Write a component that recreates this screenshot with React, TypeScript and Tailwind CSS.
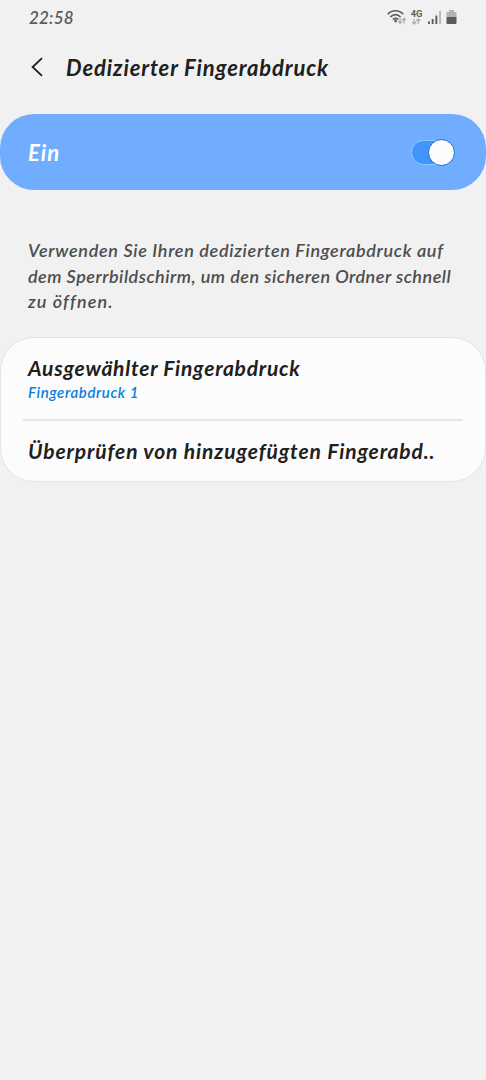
import { useState } from 'react'

const description = [
  { text: 'Verwenden Sie Ihren dedizierten Fingerabdruck auf', tracking: 'tracking-[0.68px]' },
  { text: 'dem Sperrbildschirm, um den sicheren Ordner schnell', tracking: 'tracking-[0.5px]' },
  { text: 'zu öffnen.', tracking: 'tracking-[1.1px]' },
]

function StatusIcons() {
  return (
    <svg className="h-[18px] w-[72px] not-italic" viewBox="0 0 72 18" fill="none">
      {/* wifi */}
      <g stroke="#5c5c5c" strokeWidth="1.7">
        <path d="M.8 6.2C5 1.6 12 1.6 16.2 6.2" />
        <path d="M3.4 9C6.3 5.8 10.7 5.8 13.6 9" />
        <path d="M5.9 11.5C7.5 9.9 9.7 9.9 11.2 11.5" />
      </g>
      <circle cx="8.6" cy="13" r="1.4" fill="#5c5c5c" />
      <g stroke="#b0b0b0" strokeWidth="1.3">
        <path d="M13.1 10v5.2M11.2 13.2l1.9 2 1.9-2M17.1 15.4v-5.2M15.2 12.2l1.9-2 1.9 2" />
        <path d="M27.1 11v5M25.1 14l2 2 2-2M31.3 16v-5M29.3 13l2-2 2 2" />
      </g>
      <text x="23.7" y="9" fill="#5c5c5c" fontSize="9.3" fontWeight="700" fontFamily="Roboto, sans-serif">4G</text>
      {/* signal */}
      <g fill="#5c5c5c">
        <path d="M41 13.4h1.9V16H41zM44.7 11h1.9v5h-1.9zM48.4 7.5h1.9V16h-1.9z" />
        <path d="M52.1 3h1.9v13h-1.9z" fill="#b8b8b8" />
      </g>
      {/* battery */}
      <path d="M62 2h5v2h2.5v5h-10V4H62z" fill="#b3b3b3" />
      <path d="M59.5 9h10v6.3q0 .7-.7.7h-8.6q-.7 0-.7-.7z" fill="#5c5c5c" />
    </svg>
  )
}

export default function App() {
  const [on, setOn] = useState(true)

  return (
    <div className="h-[1080px] w-[486px] overflow-hidden bg-[#f1f1f1] font-['Lato',sans-serif] text-[#202020] italic">
      <div className="flex h-9 items-start justify-between pt-2 pr-[27px] pl-[29px]">
        <span className="text-[17px] leading-5 font-semibold tracking-[0.2px] text-[#5c5c5c]">22:58</span>
        <StatusIcons />
      </div>

      <header className="flex h-[62px] items-center pl-[31px]">
        <button aria-label="Zurück" className="mr-[23px]">
          <svg className="h-5 w-3" viewBox="0 0 12 20" fill="none" stroke="#202020" strokeWidth="1.8">
            <path d="M11 1.2L1.6 10 11 18.8" />
          </svg>
        </button>
        <h1 className="text-[22px] font-bold tracking-[0.87px] whitespace-nowrap">Dedizierter Fingerabdruck</h1>
      </header>

      <section className="mt-4 flex h-[76px] items-center justify-between rounded-[34px] bg-[#71adfe] pr-[31px] pl-[28px]">
        <span className="text-[22px] font-bold tracking-[1px] text-white">Ein</span>
        <button
          role="switch"
          aria-checked={on}
          aria-label="Ein"
          onClick={() => setOn(!on)}
          className={`flex h-[25px] w-11 items-center rounded-full border border-[#8fc6ff] bg-[#4294fd] ${on ? 'justify-end' : 'justify-start'}`}
        >
          <span className="-mr-px size-[27px] shrink-0 rounded-full border-[1.5px] border-[#1272cf] bg-[#fcfcfc]" />
        </button>
      </section>

      <div className="mt-[48px] pl-[28px] text-[18px] leading-[25.7px] font-semibold whitespace-nowrap text-[#4d4d4d]">
        {description.map(line => (
          <p key={line.text} className={line.tracking}>{line.text}</p>
        ))}
      </div>

      <section className="mt-[22px] h-[145px] rounded-[34px] border border-[#e4e4e4] bg-[#fcfcfc] px-[22px]">
        <div className="h-[83px] border-b-2 border-[#e6e6e6] px-[5px] pt-[16px]">
          <h2 className="text-[21px] leading-[28px] font-bold tracking-[0.75px] whitespace-nowrap">Ausgewählter Fingerabdruck</h2>
          <p className="text-[15px] leading-5 font-semibold tracking-[0.6px] text-[#0c80dc]">Fingerabdruck 1</p>
        </div>
        <div className="px-[5px] pt-[16px]">
          <h2 className="text-[21px] leading-[28px] font-bold tracking-[0.87px] whitespace-nowrap">Überprüfen von hinzugefügten Fingerabd..</h2>
        </div>
      </section>
    </div>
  )
}
